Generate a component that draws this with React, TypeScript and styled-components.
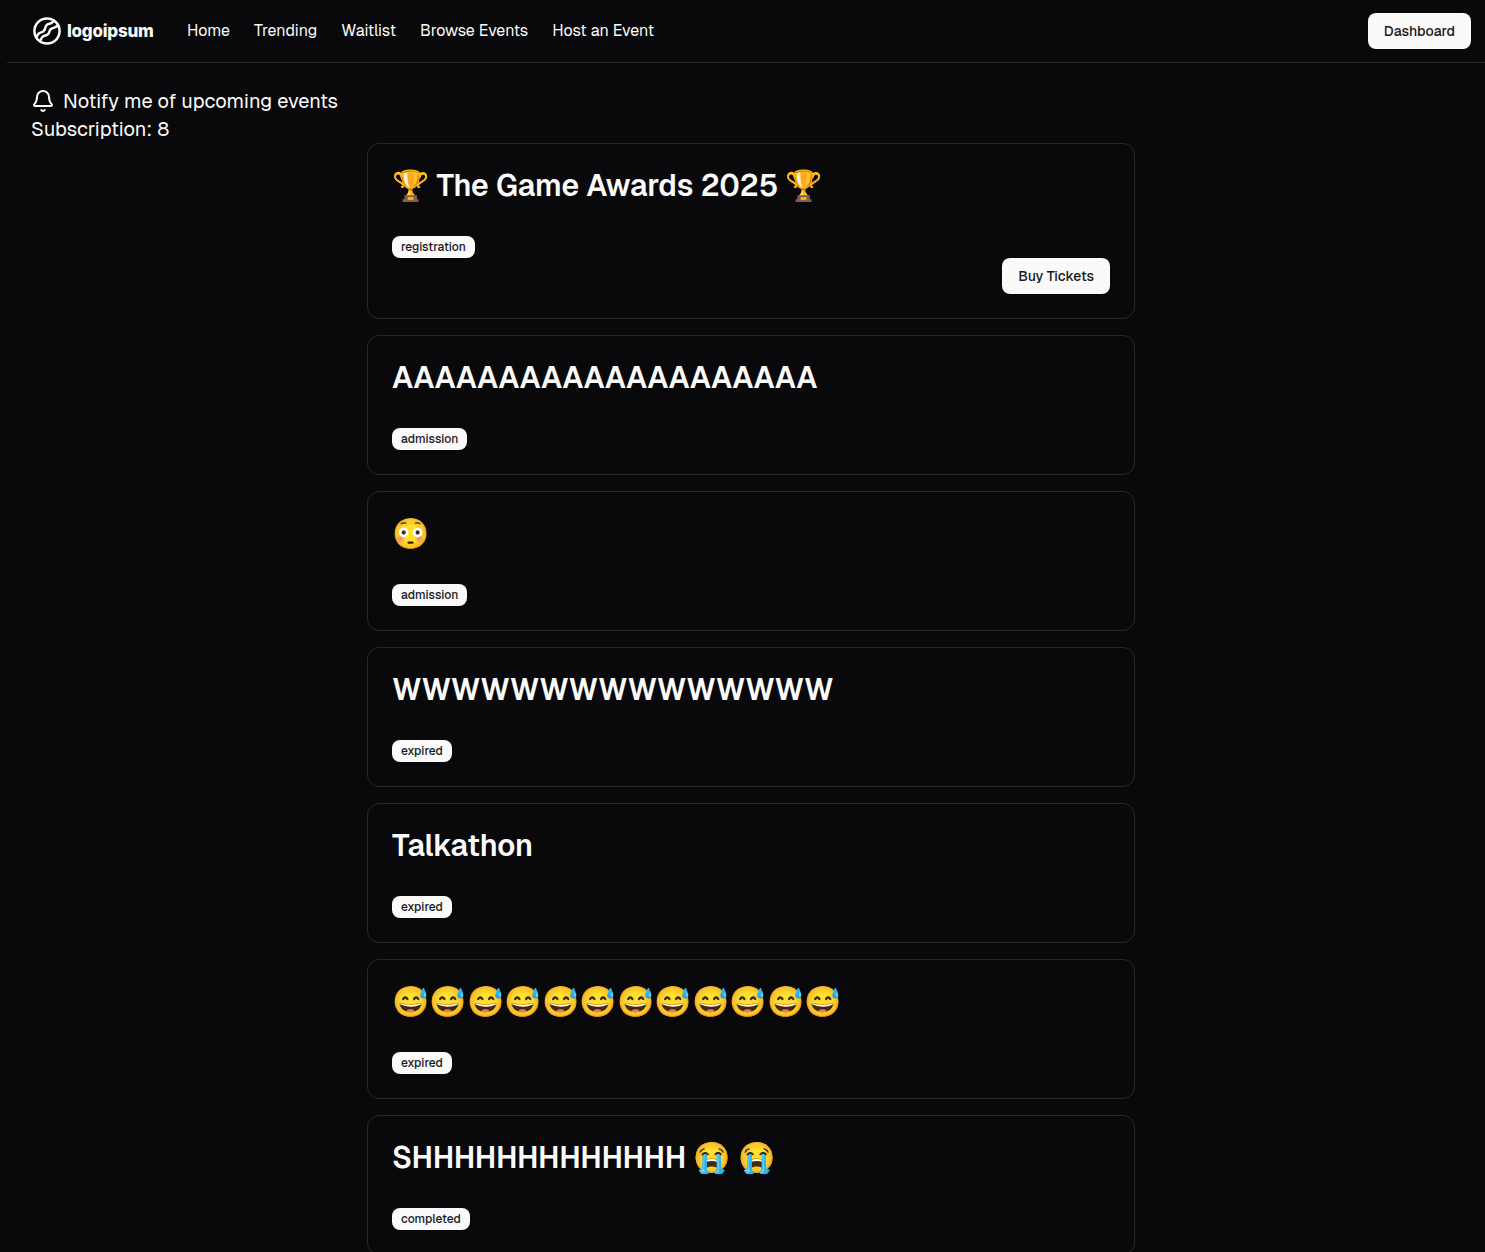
import React from "react";
import styled, { createGlobalStyle } from "styled-components";
import { Bell } from "lucide-react";

const GlobalStyle = createGlobalStyle`
  *, *::before, *::after { box-sizing: border-box; }
  body {
    margin: 0;
    height: 1252px;
    overflow: hidden;
    background: #09090b;
    color: #fafafa;
    font-family: Geist, Inter, "Noto Color Emoji", sans-serif;
    font-size: 16px;
    line-height: 24px;
  }
`;

const Page = styled.div`
  width: 1488px;
  margin-left: 7px;
`;

const Header = styled.header`
  display: flex;
  align-items: center;
  height: 63px;
  padding: 0 24px;
  border-bottom: 1px solid #27272a;
`;

const Logo = styled.a`
  display: flex;
  align-items: center;
  width: 124px;
  gap: 6px;
  padding-left: 2px;
`;

const LogoText = styled.span`
  font-family: Inter, sans-serif;
  font-size: 17px;
  font-weight: 800;
  letter-spacing: -0.25px;
  line-height: 24px;
`;

const Nav = styled.nav`
  display: flex;
  flex: 1;
  gap: 24px;
  margin-left: 32px;
`;

const NavLink = styled.a`
  margin-top: -1px;
  line-height: 24px;
  white-space: nowrap;
`;

const Button = styled.button`
  height: 36px;
  padding: 0 16px;
  border: 0;
  border-radius: 8px;
  background: #fafafa;
  color: #18181b;
  font: 500 14px/20px Geist, Inter, sans-serif;
  white-space: nowrap;
`;

const Main = styled.main`
  padding: 24px;
`;

const Notice = styled.div`
  display: flex;
  align-items: center;
  gap: 8px;
  height: 28px;
  font-size: 20px;
  line-height: 28px;
  white-space: nowrap;
`;

const Events = styled.div`
  display: flex;
  flex-direction: column;
  gap: 16px;
  width: 768px;
  margin: 0 auto;
`;

const Card = styled.article`
  display: flex;
  flex-direction: column;
  align-items: flex-start;
  padding: 24px;
  border: 1px solid #27272a;
  border-radius: 12px;
`;

const Title = styled.h2`
  margin: 0 0 32px;
  height: 36px;
  font-size: 30px;
  font-weight: 600;
  line-height: 36px;
  white-space: nowrap;
`;

const Emoji = styled.span`
  letter-spacing: 0.17px;
`;

const Badge = styled.span`
  padding: 0 9px;
  height: 22px;
  border-radius: 8px;
  background: #fafafa;
  color: #18181b;
  font-size: 12px;
  font-weight: 500;
  line-height: 22px;
`;

const Actions = styled.div`
  align-self: flex-end;
  display: flex;
`;

const LogoMark = () => (
  <svg width="28" height="28" viewBox="0 0 28 28" fill="none" stroke="currentColor" strokeWidth="2.5">
    <circle cx="14" cy="14" r="12.6" />
    <path d="M2.500 20.500C4 20 4.500 17 6.500 16s3.500-.8 4.800-2.800 1-4.200 2.700-5.400 3.300-.8 4.700-2 1.800-2 3.300-2.500" />
    <path d="M6.300 24.700C8 23.500 8 20.800 10 19.500s3.700-.6 5.200-2.500 1-3.700 2.800-5 3.200-1 4.700-2 2-2 3.600-2.300" />
  </svg>
);

const links = ["Home", "Trending", "Waitlist", "Browse Events", "Host an Event"];

const events = [
  { title: "🏆 The Game Awards 2025 🏆", status: "registration", tickets: true },
  { title: "AAAAAAAAAAAAAAAAAAAA", status: "admission" },
  { title: "😳", status: "admission" },
  { title: "WWWWWWWWWWWWWWW", status: "expired" },
  { title: "Talkathon", status: "expired" },
  { title: "😅😅😅😅😅😅😅😅😅😅😅😅", status: "expired" },
  { title: "SHHHHHHHHHHHHH 😭 😭", status: "completed" },
];

const withEmoji = (text: string) =>
  text
    .split(/(\p{Extended_Pictographic}+)/u)
    .map((part, i) => (i % 2 ? <Emoji key={i}>{part}</Emoji> : part));

export default function App() {
  return (
    <>
      <GlobalStyle />
      <Page>
        <Header>
          <Logo>
            <LogoMark />
            <LogoText>logoipsum</LogoText>
          </Logo>
          <Nav>
            {links.map((label) => (
              <NavLink key={label}>{label}</NavLink>
            ))}
          </Nav>
          <Button>Dashboard</Button>
        </Header>
        <Main>
          <Notice>
            <Bell size={24} strokeWidth={2} />
            Notify me of upcoming events
          </Notice>
          <Notice>Subscription: 8</Notice>
          <Events>
            {events.map((event) => (
              <Card key={event.title}>
                <Title>{withEmoji(event.title)}</Title>
                <Badge>{event.status}</Badge>
                {event.tickets && (
                  <Actions>
                    <Button>Buy Tickets</Button>
                  </Actions>
                )}
              </Card>
            ))}
          </Events>
        </Main>
      </Page>
    </>
  );
}
